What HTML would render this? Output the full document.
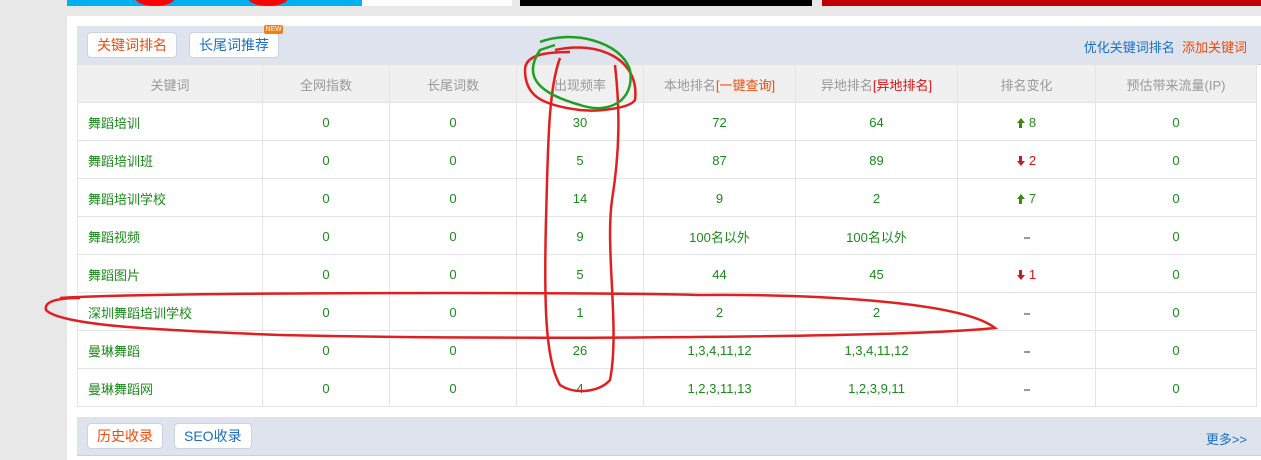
<!DOCTYPE html>
<html><head><meta charset="utf-8"><style>
body{margin:0;width:1261px;height:460px;background:#e8e8e8;position:relative;overflow:hidden;font-family:"Liberation Sans","Noto Sans CJK SC",sans-serif;font-size:13px}
.abs{position:absolute}
.panel{position:absolute;left:67px;top:16px;width:1194px;height:444px;background:#fff}
.hdr{position:absolute;left:77px;width:1184px;background:#dfe3ee;border-bottom:1px solid #c8cfe0}
.tab{position:absolute;top:6px;height:24px;line-height:24px;padding:0 9px;background:#fff;border:1px solid #cbd2e0;border-radius:4px;font-size:14px;color:#1a6fc4}
table{position:absolute;left:77px;top:64px;border-collapse:collapse;table-layout:fixed}
td,th{border:1px solid #e4e4e4;height:38px;text-align:center;color:#1a8a1a;font-weight:normal;padding:2px 0 0 0;box-sizing:border-box}
th{background:#f0f0f0;color:#999}
td.k{text-align:left;padding-left:10px}
.up{color:#2a8a1a}.dn{color:#e01010}
.ar{display:inline-block;width:0;height:0;border-left:4px solid transparent;border-right:4px solid transparent;vertical-align:middle;margin-right:4px;position:relative}
.au{border-bottom:5px solid #3a8a10;top:-3px}
.ad{border-top:5px solid #c02020;top:2px}
.au:after,.ad:after{content:"";position:absolute;left:-1.5px;width:3px;height:5px}
.au:after{top:5px;background:#3a8a10}
.ad:after{top:-10px;background:#c02020}
.ds{display:inline-block;width:6px;height:2px;background:#999;vertical-align:middle}
</style></head><body>
<div class="abs" style="left:67px;top:0;width:295px;height:6px;background:#00b0f0"></div>
<div class="abs" style="left:135px;top:-10px;width:40px;height:16px;border-radius:50%;background:#f00"></div>
<div class="abs" style="left:248px;top:-10px;width:40px;height:16px;border-radius:50%;background:#f00"></div>
<div class="abs" style="left:362px;top:0;width:150px;height:6px;background:#fff"></div>
<div class="abs" style="left:520px;top:0;width:292px;height:6px;background:#000"></div>
<div class="abs" style="left:822px;top:0;width:439px;height:6px;background:#c00000"></div>
<div class="panel"></div>
<div class="hdr" style="top:26px;height:38px">
<div class="tab" style="left:10px;color:#f04a0a">关键词排名</div>
<div class="tab" style="left:112px">长尾词推荐</div>
<div class="abs" style="left:187px;top:-1px;width:19px;height:9px;background:#f08010;color:#fff;font-size:7px;line-height:9px;text-align:center;border-radius:2px">NEW</div>
<div class="abs" style="right:14px;top:11px;font-size:13px"><span style="color:#1a6fc4">优化关键词排名</span>&nbsp;&nbsp;<span style="color:#f04a0a">添加关键词</span></div>
</div>
<table>
<colgroup><col style="width:185px"><col style="width:127px"><col style="width:127px"><col style="width:127px"><col style="width:152px"><col style="width:162px"><col style="width:138px"><col style="width:161px"></colgroup>
<tr><th>关键词</th><th>全网指数</th><th>长尾词数</th><th>出现频率</th><th>本地排名<span style="color:#f04a0a">[一键查询]</span></th><th>异地排名<span style="color:#e01010">[异地排名]</span></th><th>排名变化</th><th>预估带来流量(IP)</th></tr>
<tr><td class="k">舞蹈培训</td><td>0</td><td>0</td><td>30</td><td>72</td><td>64</td><td class="up"><i class="ar au"></i>8</td><td>0</td></tr>
<tr><td class="k">舞蹈培训班</td><td>0</td><td>0</td><td>5</td><td>87</td><td>89</td><td class="dn"><i class="ar ad"></i>2</td><td>0</td></tr>
<tr><td class="k">舞蹈培训学校</td><td>0</td><td>0</td><td>14</td><td>9</td><td>2</td><td class="up"><i class="ar au"></i>7</td><td>0</td></tr>
<tr><td class="k">舞蹈视频</td><td>0</td><td>0</td><td>9</td><td>100名以外</td><td>100名以外</td><td><i class="ds"></i></td><td>0</td></tr>
<tr><td class="k">舞蹈图片</td><td>0</td><td>0</td><td>5</td><td>44</td><td>45</td><td class="dn"><i class="ar ad"></i>1</td><td>0</td></tr>
<tr><td class="k">深圳舞蹈培训学校</td><td>0</td><td>0</td><td>1</td><td>2</td><td>2</td><td><i class="ds"></i></td><td>0</td></tr>
<tr><td class="k">曼琳舞蹈</td><td>0</td><td>0</td><td>26</td><td>1,3,4,11,12</td><td>1,3,4,11,12</td><td><i class="ds"></i></td><td>0</td></tr>
<tr><td class="k">曼琳舞蹈网</td><td>0</td><td>0</td><td>4</td><td>1,2,3,11,13</td><td>1,2,3,9,11</td><td><i class="ds"></i></td><td>0</td></tr>
</table>
<div class="hdr" style="top:417px;height:38px">
<div class="tab" style="left:10px;color:#f04a0a">历史收录</div>
<div class="tab" style="left:97px">SEO收录</div>
<div class="abs" style="right:14px;top:12px;color:#1a6fc4">更多&gt;&gt;</div>
</div>
<svg class="abs" style="left:0;top:0" width="1261" height="460" fill="none" stroke-width="2.5">
<path d="M555 50 C600 40 640 60 635 100 C630 108 600 112 580 110 C540 105 525 95 525 70 C525 55 545 52 570 52" stroke="#e02020"/>
<path d="M560 58 C548 90 548 150 546 220 C544 300 545 360 560 385 C575 395 600 392 610 380 C620 330 605 250 612 200 C620 150 620 110 615 65" stroke="#e02020"/>
<path d="M540 42 C570 30 620 40 630 70 C635 100 610 115 580 105 C545 95 520 80 540 50 L555 45" stroke="#20a020"/>
<path d="M60 298 C150 292 600 292 700 295 C800 294 960 300 995 328 C900 338 500 340 280 335 C150 330 60 325 46 310 C44 302 55 298 80 298" stroke="#e02020"/>
</svg>
</body></html>
